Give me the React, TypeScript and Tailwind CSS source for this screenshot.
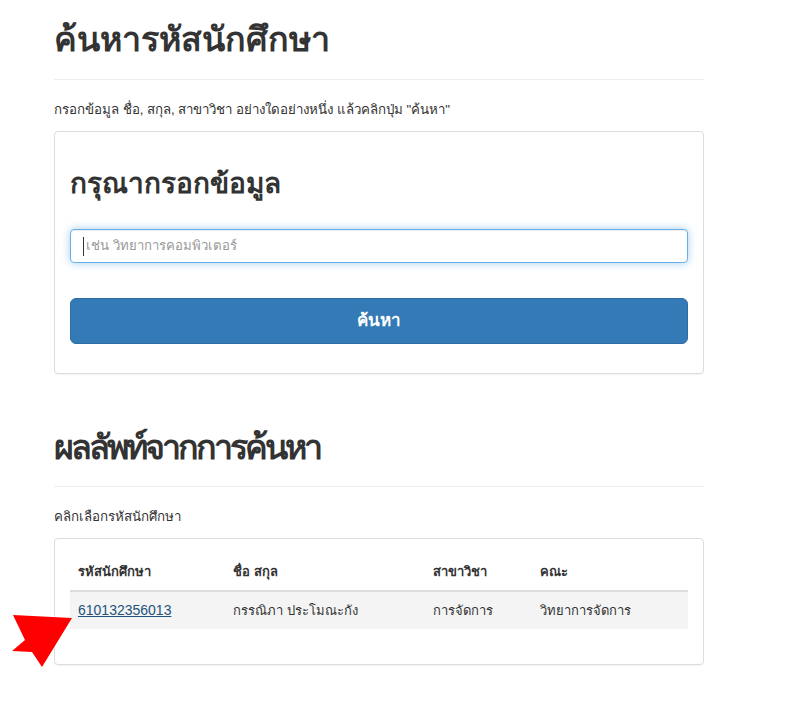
import React from "react";

export default function App() {
  return (
    <div
      className="min-h-[720px] w-[787px] bg-white text-[#333] relative"
      style={{ fontFamily: '"Helvetica Neue", Helvetica, Arial, "Liberation Sans", sans-serif' }}
    >
      <div className="ml-[54px] w-[650px]">
        {/* Header */}
        <div className="pt-[20px] pb-[19px] border-b border-[#eee]">
          <h1 className="text-[34px] leading-[39.6px] font-bold">ค้นหารหัสนักศึกษา</h1>
        </div>
        <p className="mt-[20px] text-[13.3px] leading-[20px]">
          กรอกข้อมูล ชื่อ, สกุล, สาขาวิชา อย่างใดอย่างหนึ่ง แล้วคลิกปุ่ม "ค้นหา"
        </p>

        {/* Search panel */}
        <div className="mt-[11px] border border-[#ddd] rounded-[4px] px-[15px] pt-[35px] pb-[29px] shadow-[0_1px_1px_rgba(0,0,0,0.05)]">
          <h2 className="text-[28px] leading-[33px] font-bold">กรุณากรอกข้อมูล</h2>
          <div className="relative mt-[29px]">
            <input
              type="text"
              placeholder="เช่น วิทยาการคอมพิวเตอร์"
              className="block w-full h-[34px] pl-[15px] pr-[12px] text-[13.2px] rounded-[4px] border border-[#66afe9] outline-none shadow-[inset_0_1px_1px_rgba(0,0,0,0.075),0_0_8px_rgba(102,175,233,0.6)] placeholder:text-[#999] text-[#555]"
            />
            <span className="absolute left-[13px] top-[8px] h-[19px] w-px bg-[#333]" />
          </div>
          <button className="mt-[35px] block w-full h-[46px] rounded-[6px] bg-[#337ab7] border border-[#2e6da4] text-white text-[17px] font-semibold">
            ค้นหา
          </button>
        </div>

        {/* Results header */}
        <div className="mt-[34px] pt-[20px] pb-[19px] border-b border-[#eee]">
          <h1 className="text-[34px] leading-[39.6px] font-bold tracking-[-3px]">ผลลัพท์จากการค้นหา</h1>
        </div>
        <p className="mt-[20px] text-[13.3px] leading-[20px]">คลิกเลือกรหัสนักศึกษา</p>

        {/* Results panel */}
        <div className="mt-[11px] border border-[#ddd] rounded-[4px] px-[15px] pt-[15px] pb-[35px] shadow-[0_1px_1px_rgba(0,0,0,0.05)]">
          <table className="w-full border-collapse text-[13px]">
            <thead>
              <tr className="border-b-2 border-[#ddd]">
                <th className="w-[155px] text-left font-bold px-[8px] py-[8px] leading-[20px]">รหัสนักศึกษา</th>
                <th className="w-[200px] text-left font-bold px-[8px] py-[8px] leading-[20px]">ชื่อ สกุล</th>
                <th className="w-[107px] text-left font-bold px-[8px] py-[8px] leading-[20px]">สาขาวิชา</th>
                <th className="text-left font-bold px-[8px] py-[8px] leading-[20px]">คณะ</th>
              </tr>
            </thead>
            <tbody>
              <tr className="bg-[#f4f4f4]">
                <td className="px-[8px] py-[8px] leading-[20px]">
                  <a href="#" className="text-[14px] text-[#23527c] underline">610132356013</a>
                </td>
                <td className="px-[8px] py-[8px] leading-[20px]">กรรณิภา ประโมณะกัง</td>
                <td className="px-[8px] py-[8px] leading-[20px]">การจัดการ</td>
                <td className="px-[8px] py-[8px] leading-[20px]">วิทยาการจัดการ</td>
              </tr>
            </tbody>
          </table>
        </div>
      </div>

      {/* Red arrow annotation */}
      <svg className="absolute left-0 top-[600px]" width="90" height="80" viewBox="0 600 90 80">
        <polygon points="13,615 72,618 42,667 32,652 12,651 25,640" fill="#ff0000" />
      </svg>
    </div>
  );
}
